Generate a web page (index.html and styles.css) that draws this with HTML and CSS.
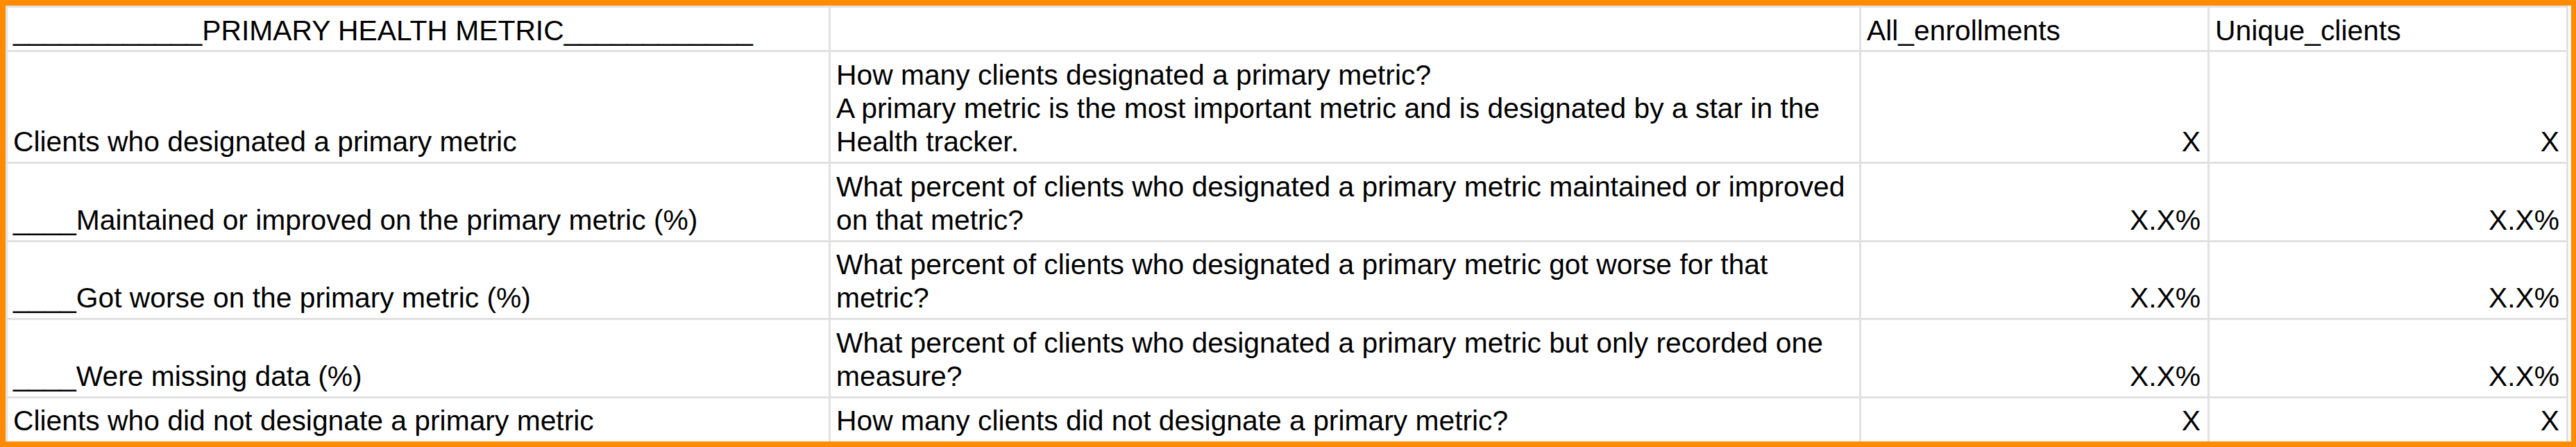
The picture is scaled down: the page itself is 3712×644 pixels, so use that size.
FILE: index.html
```html
<!DOCTYPE html>
<html>
<head>
<meta charset="utf-8">
<link rel="stylesheet" href="styles.css">
</head>
<body>
<div class="frame">
  <div class="sheet">
    <div class="cell r1">____________PRIMARY HEALTH METRIC____________</div>
    <div class="cell r1"></div>
    <div class="cell r1">All_enrollments</div>
    <div class="cell r1">Unique_clients</div>

    <div class="cell">Clients who designated a primary metric</div>
    <div class="cell">How many clients designated a primary metric?<br>A primary metric is the most important metric and is designated by a star in the<br>Health tracker.</div>
    <div class="cell num">X</div>
    <div class="cell num">X</div>

    <div class="cell">____Maintained or improved on the primary metric (%)</div>
    <div class="cell">What percent of clients who designated a primary metric maintained or improved<br>on that metric?</div>
    <div class="cell num">X.X%</div>
    <div class="cell num">X.X%</div>

    <div class="cell">____Got worse on the primary metric (%)</div>
    <div class="cell">What percent of clients who designated a primary metric got worse for that<br>metric?</div>
    <div class="cell num">X.X%</div>
    <div class="cell num">X.X%</div>

    <div class="cell">____Were missing data (%)</div>
    <div class="cell">What percent of clients who designated a primary metric but only recorded one<br>measure?</div>
    <div class="cell num">X.X%</div>
    <div class="cell num">X.X%</div>

    <div class="cell last">Clients who did not designate a primary metric</div>
    <div class="cell last">How many clients did not designate a primary metric?</div>
    <div class="cell last num">X</div>
    <div class="cell last num">X</div>
  </div>
</div>
</body>
</html>
```

FILE: styles.css
```css
html, body {
  margin: 0;
  padding: 0;
  background: #ffffff;
}

.frame {
  box-sizing: border-box;
  width: 3712px;
  height: 644px;
  border-style: solid;
  border-color: #ff8c00;
  border-width: 8px 7px 8px 8px;
  background: #ffffff;
  overflow: hidden;
}

.sheet {
  display: grid;
  grid-template-columns: 1186px 1485px 502px 517px;
  grid-template-rows: 64px 161px 113px 112px 113px 62px;
  width: 3693px;
  box-sizing: border-box;
  border-top: 3px solid #e1e1e1;
  border-left: 3px solid #e1e1e1;
  font-family: "Liberation Sans", Arial, sans-serif;
  font-size: 40.8px;
  line-height: 48px;
  color: #000000;
}

.cell {
  box-sizing: border-box;
  display: flex;
  flex-direction: column;
  justify-content: flex-end;
  border-right: 3px solid #e1e1e1;
  border-bottom: 3px solid #e1e1e1;
  padding: 0 10px 5px 8px;
  white-space: nowrap;
  overflow: hidden;
}

.r1 {
  padding-bottom: 4px;
}

.num {
  text-align: right;
}

.last {
  border-bottom: none;
  padding-bottom: 6px;
}
```
